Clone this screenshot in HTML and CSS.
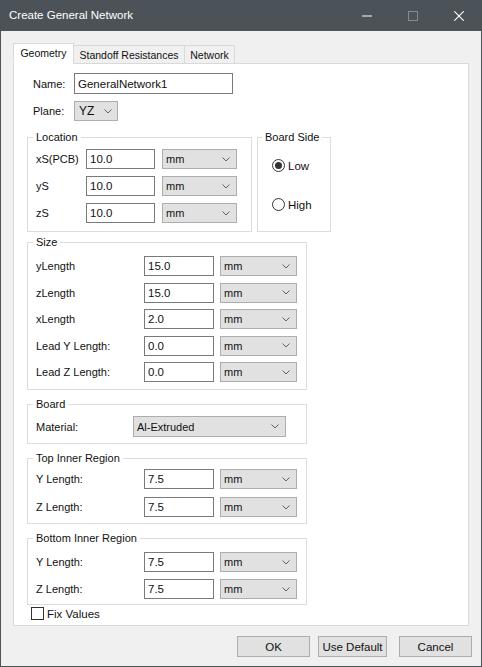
FILE: index.html
```html
<!DOCTYPE html>
<html>
<head>
<meta charset="utf-8">
<link rel="stylesheet" href="styles.css">
</head>
<body>
<div class="window">
  <div class="titlebar">
    <span class="title">Create General Network</span>
    <div class="controls">
      <span class="ctl"><svg width="10" height="10" viewBox="0 0 10 10"><rect x="0" y="4.5" width="10" height="1" fill="#ffffff"/></svg></span>
      <span class="ctl"><svg width="10" height="10" viewBox="0 0 10 10"><rect x="0.5" y="0.5" width="9" height="9" fill="none" stroke="#858b90" stroke-width="1"/></svg></span>
      <span class="ctl"><svg width="10" height="10" viewBox="0 0 10 10"><path d="M0.3 0.3 L9.7 9.7 M9.7 0.3 L0.3 9.7" stroke="#ffffff" stroke-width="1.1" fill="none"/></svg></span>
    </div>
  </div>
  <div class="client">
    <div class="tabs">
      <div class="tab active t-geo">Geometry</div>
      <div class="tab t-stand">Standoff Resistances</div>
      <div class="tab t-net">Network</div>
    </div>
    <div class="panel">
      <div class="row name-row">
        <span class="lbl l-name">Name:</span>
        <div class="input i-name">GeneralNetwork1</div>
      </div>
      <div class="row plane-row">
        <span class="lbl l-name">Plane:</span>
        <div class="combo c-plane"><span class="big">YZ</span><svg class="chev" width="8" height="5" viewBox="0 0 8 5"><path d="M0.5 0.5 L4 4 L7.5 0.5" stroke="#606060" fill="none"/></svg></div>
      </div>

      <div class="group-line">
        <div class="group g-loc">
          <div class="gtitle">Location</div>
          <div class="rows r-loc">
            <div class="row"><span class="lbl l-loc">xS(PCB)</span><div class="input i-loc">10.0</div><div class="combo c-loc"><span>mm</span><svg class="chev" width="8" height="5" viewBox="0 0 8 5"><path d="M0.5 0.5 L4 4 L7.5 0.5" stroke="#606060" fill="none"/></svg></div></div>
            <div class="row"><span class="lbl l-loc">yS</span><div class="input i-loc">10.0</div><div class="combo c-loc"><span>mm</span><svg class="chev" width="8" height="5" viewBox="0 0 8 5"><path d="M0.5 0.5 L4 4 L7.5 0.5" stroke="#606060" fill="none"/></svg></div></div>
            <div class="row"><span class="lbl l-loc">zS</span><div class="input i-loc">10.0</div><div class="combo c-loc"><span>mm</span><svg class="chev" width="8" height="5" viewBox="0 0 8 5"><path d="M0.5 0.5 L4 4 L7.5 0.5" stroke="#606060" fill="none"/></svg></div></div>
          </div>
        </div>
        <div class="group g-side">
          <div class="gtitle gt-side">Board Side</div>
          <div class="radios">
            <div class="radio-row r1"><span class="radio on"></span><span class="rlbl">Low</span></div>
            <div class="radio-row r2"><span class="radio"></span><span class="rlbl">High</span></div>
          </div>
        </div>
      </div>

      <div class="group g-wide g-size">
        <div class="gtitle">Size</div>
        <div class="rows r-size">
          <div class="row"><span class="lbl l-wide">yLength</span><div class="input i-wide">15.0</div><div class="combo c-wide"><span>mm</span><svg class="chev" width="8" height="5" viewBox="0 0 8 5"><path d="M0.5 0.5 L4 4 L7.5 0.5" stroke="#606060" fill="none"/></svg></div></div>
          <div class="row"><span class="lbl l-wide">zLength</span><div class="input i-wide">15.0</div><div class="combo c-wide"><span>mm</span><svg class="chev" width="8" height="5" viewBox="0 0 8 5"><path d="M0.5 0.5 L4 4 L7.5 0.5" stroke="#606060" fill="none"/></svg></div></div>
          <div class="row"><span class="lbl l-wide">xLength</span><div class="input i-wide">2.0</div><div class="combo c-wide"><span>mm</span><svg class="chev" width="8" height="5" viewBox="0 0 8 5"><path d="M0.5 0.5 L4 4 L7.5 0.5" stroke="#606060" fill="none"/></svg></div></div>
          <div class="row"><span class="lbl l-wide">Lead Y Length:</span><div class="input i-wide">0.0</div><div class="combo c-wide"><span>mm</span><svg class="chev" width="8" height="5" viewBox="0 0 8 5"><path d="M0.5 0.5 L4 4 L7.5 0.5" stroke="#606060" fill="none"/></svg></div></div>
          <div class="row"><span class="lbl l-wide">Lead Z Length:</span><div class="input i-wide">0.0</div><div class="combo c-wide"><span>mm</span><svg class="chev" width="8" height="5" viewBox="0 0 8 5"><path d="M0.5 0.5 L4 4 L7.5 0.5" stroke="#606060" fill="none"/></svg></div></div>
        </div>
      </div>

      <div class="group g-wide g-board">
        <div class="gtitle">Board</div>
        <div class="rows r-board">
          <div class="row row-mat"><span class="lbl l-mat">Material:</span><div class="combo c-mat"><span>Al-Extruded</span><svg class="chev" width="8" height="5" viewBox="0 0 8 5"><path d="M0.5 0.5 L4 4 L7.5 0.5" stroke="#606060" fill="none"/></svg></div></div>
        </div>
      </div>

      <div class="group g-wide g-top">
        <div class="gtitle">Top Inner Region</div>
        <div class="rows r-top">
          <div class="row"><span class="lbl l-wide">Y Length:</span><div class="input i-wide">7.5</div><div class="combo c-wide"><span>mm</span><svg class="chev" width="8" height="5" viewBox="0 0 8 5"><path d="M0.5 0.5 L4 4 L7.5 0.5" stroke="#606060" fill="none"/></svg></div></div>
          <div class="row"><span class="lbl l-wide">Z Length:</span><div class="input i-wide">7.5</div><div class="combo c-wide"><span>mm</span><svg class="chev" width="8" height="5" viewBox="0 0 8 5"><path d="M0.5 0.5 L4 4 L7.5 0.5" stroke="#606060" fill="none"/></svg></div></div>
        </div>
      </div>

      <div class="group g-wide g-bottom">
        <div class="gtitle">Bottom Inner Region</div>
        <div class="rows r-bottom">
          <div class="row"><span class="lbl l-wide">Y Length:</span><div class="input i-wide">7.5</div><div class="combo c-wide"><span>mm</span><svg class="chev" width="8" height="5" viewBox="0 0 8 5"><path d="M0.5 0.5 L4 4 L7.5 0.5" stroke="#606060" fill="none"/></svg></div></div>
          <div class="row"><span class="lbl l-wide">Z Length:</span><div class="input i-wide">7.5</div><div class="combo c-wide"><span>mm</span><svg class="chev" width="8" height="5" viewBox="0 0 8 5"><path d="M0.5 0.5 L4 4 L7.5 0.5" stroke="#606060" fill="none"/></svg></div></div>
        </div>
      </div>

      <div class="check-row">
        <span class="checkbox"></span><span class="clbl">Fix Values</span>
      </div>
    </div>
    <div class="buttons">
      <div class="btn b-ok">OK</div>
      <div class="btn b-def">Use Default</div>
      <div class="btn b-cancel">Cancel</div>
    </div>
  </div>
</div>
</body>
</html>
```

FILE: styles.css
```css
html, body {
  margin: 0;
  padding: 0;
  background: #f0f0f0;
}
body {
  font-family: "Liberation Sans", Arial, sans-serif;
  font-size: 11px;
  color: #111;
}
.window {
  width: 482px;
  height: 667px;
  display: flex;
  flex-direction: column;
  background: #f0f0f0;
}
.titlebar {
  height: 31px;
  flex: none;
  background: #4b5359;
  display: flex;
  align-items: center;
  color: #ffffff;
}
.title {
  padding-left: 9px;
  font-size: 11.5px;
  padding-bottom: 1px;
}
.controls {
  margin-left: auto;
  display: flex;
  height: 31px;
}
.ctl {
  width: 46px;
  height: 31px;
  display: flex;
  align-items: center;
  justify-content: center;
}
.client {
  flex: 1;
  box-sizing: border-box;
  border: 1px solid #4b5359;
  border-top: none;
  padding-left: 12px;
  display: flex;
  flex-direction: column;
}
.tabs {
  margin-top: 12px;
  height: 21px;
  margin-bottom: -1px;
  display: flex;
  align-items: flex-end;
  position: relative;
  z-index: 1;
  font-size: 10.5px;
}
.tab {
  box-sizing: border-box;
  height: 19px;
  border: 1px solid #d9d9d9;
  background: #f0f0f0;
  display: flex;
  align-items: center;
  justify-content: center;
  margin-left: -1px;
  white-space: nowrap;
}
.tab.active {
  height: 21px;
  background: #ffffff;
  border-bottom-color: #ffffff;
  margin-left: 0;
  padding-bottom: 1px;
}
.t-geo { width: 61px; }
.t-stand { width: 112px; }
.t-net { width: 51px; }

.panel {
  width: 456px;
  height: 563px;
  box-sizing: border-box;
  border: 1px solid #d9d9d9;
  background: #ffffff;
  flex: none;
}
.row {
  display: flex;
  align-items: center;
}
.lbl {
  flex: none;
}
.input {
  box-sizing: border-box;
  height: 20px;
  border: 1px solid #7a7a7a;
  background: #ffffff;
  padding-left: 3px;
  display: flex;
  align-items: center;
  font-size: 11.5px;
  flex: none;
}
.combo {
  box-sizing: border-box;
  height: 20px;
  border: 1px solid #adadad;
  background: #e1e1e1;
  padding-left: 3px;
  padding-right: 6px;
  display: flex;
  align-items: center;
  justify-content: space-between;
  flex: none;
}
.combo .big { font-size: 12px; padding-left: 1px; }
.chev { display: block; }

.name-row {
  margin-top: 9px;
  padding-left: 19px;
}
.l-name { width: 41px; }
.i-name { width: 159px; height: 21px; }
.plane-row {
  margin-top: 7px;
  padding-left: 19px;
}
.c-plane { width: 44px; padding-right: 5px; }

.group-line {
  margin-top: 16px;
  margin-left: 13px;
  display: flex;
  gap: 5px;
}
.group {
  box-sizing: border-box;
  border: 1px solid #dcdcdc;
}
.gtitle {
  width: fit-content;
  height: 13px;
  line-height: 13px;
  margin-top: -7px;
  margin-left: 5px;
  padding: 0 3px;
  background: #ffffff;
}
.gt-side { margin-left: 4px; }
.rows {
  display: flex;
  flex-direction: column;
  padding: 5px 8px 8px 8px;
}
.g-loc { width: 225px; }
.r-loc { gap: 7px; }
.l-loc { width: 50px; }
.i-loc { width: 69px; }
.c-loc { width: 75px; margin-left: 7px; }

.g-side { width: 74px; }
.radios {
  padding-left: 14px;
}
.radio-row {
  display: flex;
  align-items: center;
  height: 13px;
}
.r1 { margin-top: 15px; }
.r2 { margin-top: 26px; }
.radio {
  box-sizing: border-box;
  width: 13px;
  height: 13px;
  border: 1px solid #333333;
  border-radius: 50%;
  background: #ffffff;
  display: flex;
  align-items: center;
  justify-content: center;
  flex: none;
}
.radio.on::after {
  content: "";
  width: 7px;
  height: 7px;
  border-radius: 50%;
  background: #333333;
}
.rlbl {
  margin-left: 3px;
  font-size: 11.5px;
}

.g-wide {
  width: 280px;
  margin-left: 13px;
}
.g-size { margin-top: 10px; }
.r-size { gap: 6.5px; padding-top: 7px; padding-bottom: 7px; }
.l-wide { width: 108px; }
.i-wide { width: 70px; }
.c-wide { width: 77px; margin-left: 6px; }

.g-board { margin-top: 14px; }
.r-board { padding-top: 5px; padding-bottom: 6px; }
.l-mat { width: 97px; }
.c-mat { width: 153px; height: 21px; }

.g-top { margin-top: 14px; }
.r-top { gap: 8px; padding-top: 4px; padding-bottom: 6px; }
.g-bottom { margin-top: 14px; }
.r-bottom { gap: 7px; padding-top: 7px; padding-bottom: 5px; }

.check-row {
  margin-top: 2px;
  margin-left: 17px;
  display: flex;
  align-items: center;
}
.checkbox {
  box-sizing: border-box;
  width: 13px;
  height: 13px;
  border: 1px solid #333333;
  background: #ffffff;
}
.clbl {
  margin-left: 3px;
  font-size: 11.5px;
}

.buttons {
  margin-top: 10px;
  display: flex;
  justify-content: flex-end;
  padding-right: 9px;
}
.btn {
  box-sizing: border-box;
  height: 21px;
  border: 1px solid #adadad;
  background: #e1e1e1;
  display: flex;
  align-items: center;
  justify-content: center;
  font-size: 11.5px;
}
.b-ok { width: 73px; margin-right: 8px; }
.b-def { width: 69px; margin-right: 12px; }
.b-cancel { width: 73px; }
```
